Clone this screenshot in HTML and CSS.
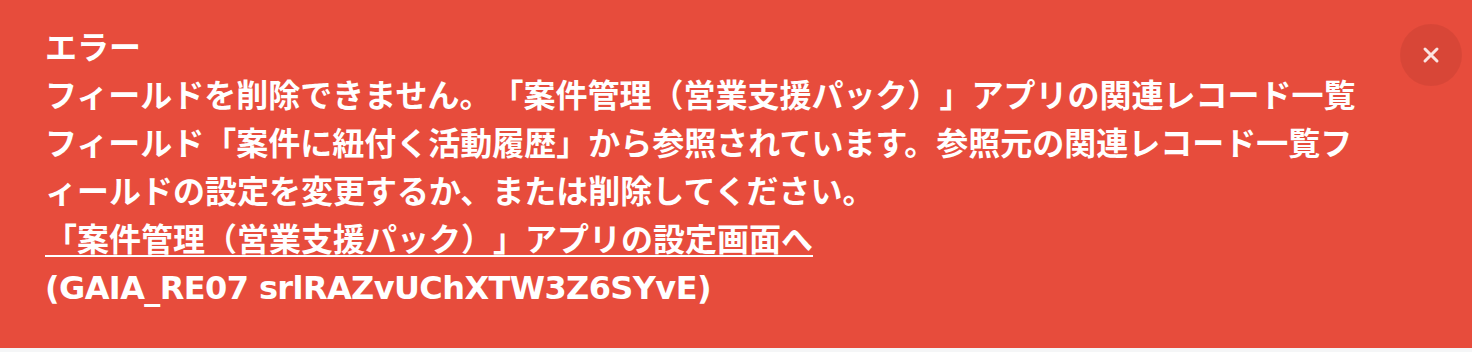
FILE: index.html
```html
<!DOCTYPE html>
<html lang="ja">
<head>
    <meta charset="UTF-8">
    <meta name="viewport" content="width=device-width, initial-scale=1.0">
    <title>エラー</title>
    <link rel="stylesheet" href="styles.css">
</head>
<body>
    <div class="notify-error">
        <div class="notify-body">
            <p class="notify-title">エラー</p>
            <p class="notify-message">フィールドを削除できません。「案件管理（営業支援パック）」アプリの関連レコード一覧フィールド「案件に紐付く活動履歴」から参照されています。参照元の関連レコード一覧フィールドの設定を変更するか、または削除してください。</p>
            <p><a class="notify-link" href="#">「案件管理（営業支援パック）」アプリの設定画面へ</a></p>
            <p class="notify-code">(GAIA_RE07 srlRAZvUChXTW3Z6SYvE)</p>
        </div>
        <button class="notify-close" type="button" aria-label="閉じる">
            <svg width="18" height="18" viewBox="0 0 18 18">
                <path d="M3 3 L15 15 M15 3 L3 15" stroke="#fff" stroke-width="3" stroke-linecap="round"/>
            </svg>
        </button>
    </div>
</body>
</html>
```

FILE: styles.css
```css
* {
    margin: 0;
    padding: 0;
    box-sizing: border-box;
}

body {
    font-family: "DejaVu Sans", "Noto Sans CJK JP", sans-serif;
    background-color: #f5f6f7;
    color: #fff;
}

.notify-error {
    display: flex;
    align-items: flex-start;
    justify-content: space-between;
    height: 348px;
    background-color: #e74c3c;
    padding: 24px 10px 0 45px;
}

.notify-body {
    width: 1330px;
    font-size: 32px;
    font-weight: bold;
    line-height: 48px;
    text-spacing-trim: space-all;
}

.notify-link {
    color: #fff;
    text-decoration: underline;
    text-decoration-thickness: 2px;
    text-underline-offset: 4px;
}

.notify-code {
    letter-spacing: -0.6px;
}

.notify-close {
    width: 62px;
    height: 62px;
    border: none;
    border-radius: 50%;
    background-color: rgba(0, 0, 0, 0.07);
    display: flex;
    align-items: center;
    justify-content: center;
    opacity: 0.85;
    cursor: pointer;
}
```
